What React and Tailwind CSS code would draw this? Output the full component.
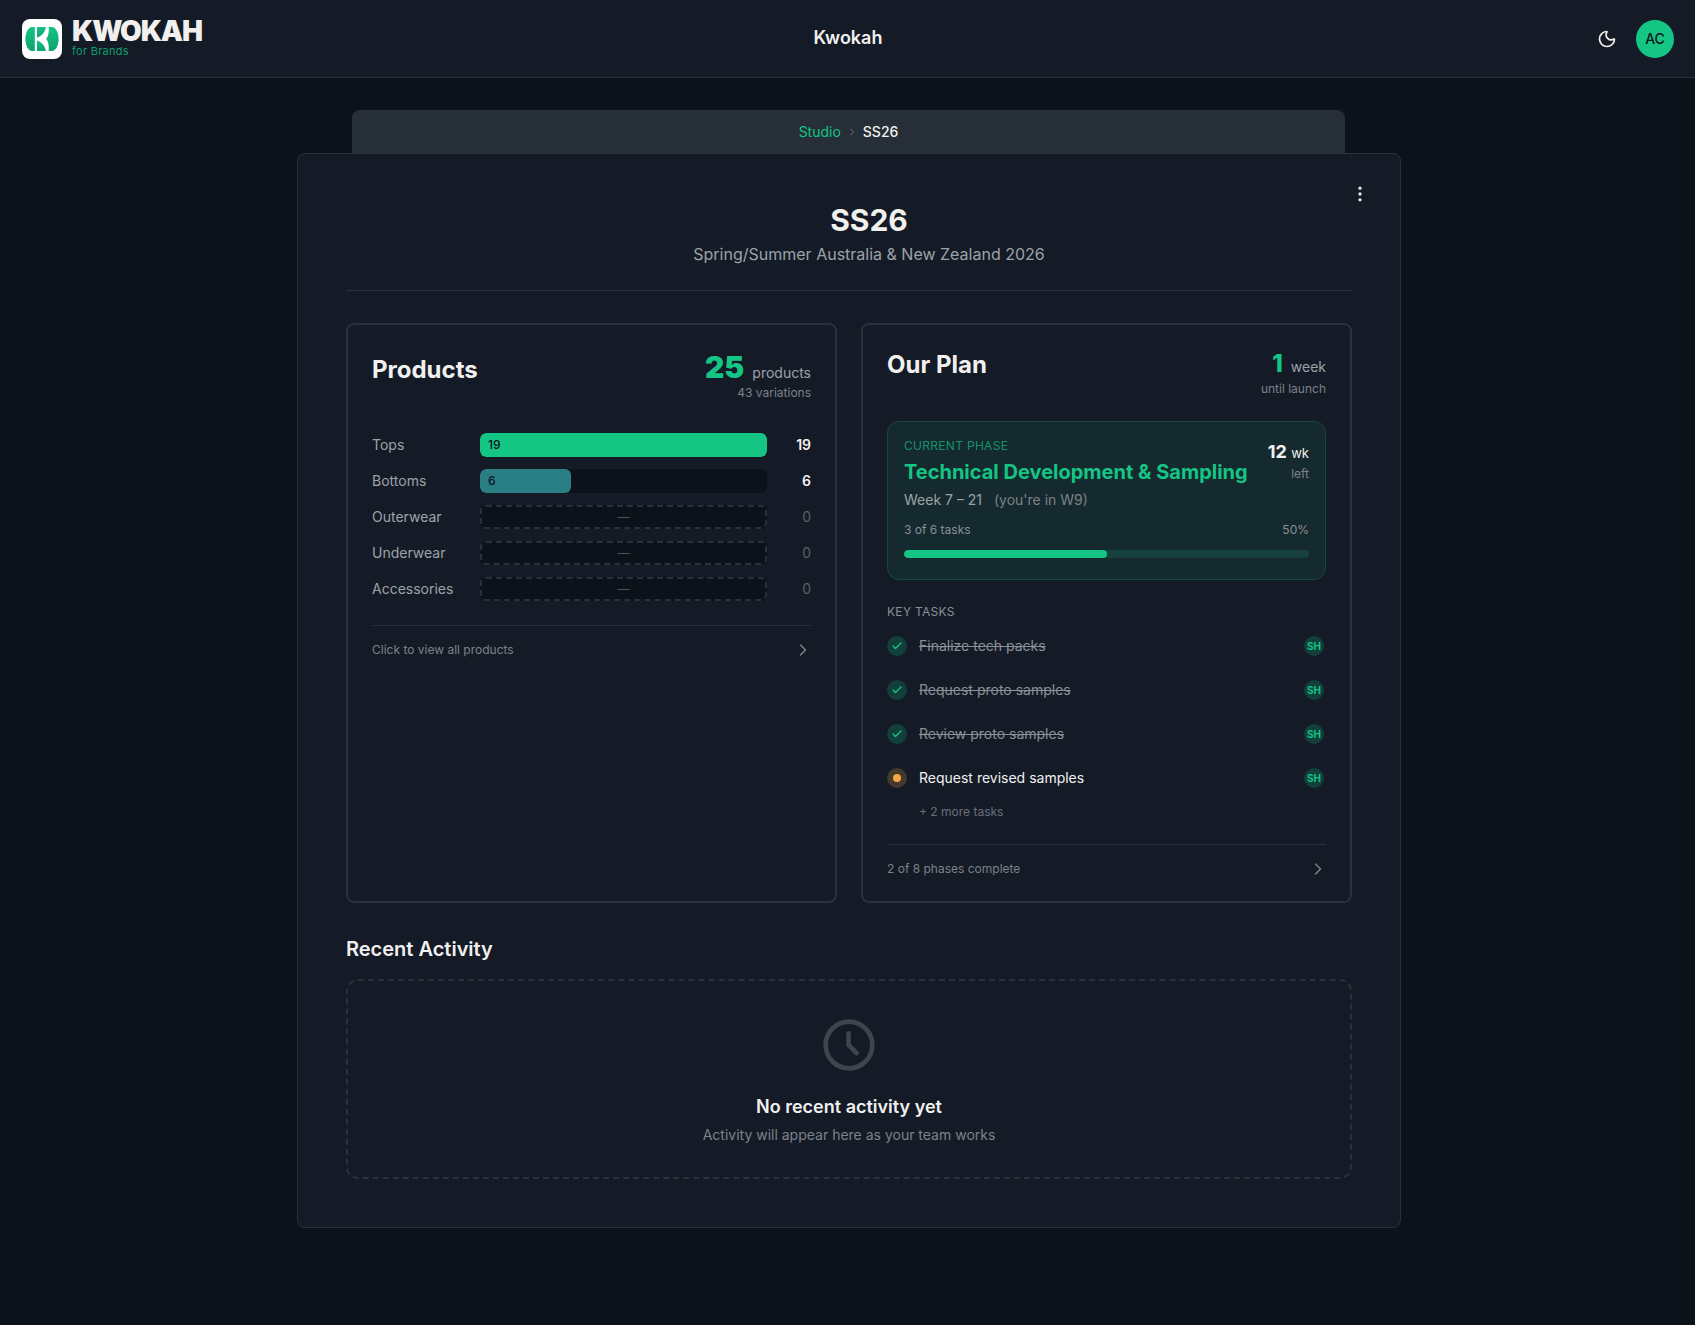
// App.jsx - Kwokah collection overview
import { ChevronRight, Moon, MoreVertical, Check } from 'lucide-react'

const categories = [
  { name: 'Tops', count: 19, fill: 'w-full bg-[#14c584]' },
  { name: 'Bottoms', count: 6, fill: 'w-[31.6%] bg-[#2a7f85]' },
  { name: 'Outerwear', count: 0 },
  { name: 'Underwear', count: 0 },
  { name: 'Accessories', count: 0 },
]

const tasks = [
  { title: 'Finalize tech packs', done: true },
  { title: 'Request proto samples', done: true },
  { title: 'Review proto samples', done: true },
  { title: 'Request revised samples', done: false },
]

function Logo() {
  return (
    <svg width="40" height="40" viewBox="0 0 40 40" className="shrink-0">
      <defs>
        <linearGradient id="logoGreen" x1="0" y1="0" x2="0" y2="1">
          <stop offset="0" stopColor="#14c584" />
          <stop offset="1" stopColor="#0ea371" />
        </linearGradient>
      </defs>
      <rect width="40" height="40" rx="8" fill="#fff" />
      <path d="M12.8 8H10C6.5 8 3.4 13 3.4 20s3.1 12 6.6 12h2.8z" fill="url(#logoGreen)" />
      <path d="M15 18.6V8h8.8C23.4 12.6 19.8 17.2 15 18.6z" fill="url(#logoGreen)" />
      <path d="M15 21.4V32h8.8C23.4 27.4 19.8 22.8 15 21.4z" fill="url(#logoGreen)" />
      <path d="M26.6 8H30c3.5 0 6.6 5 6.6 12S33.5 32 30 32h-3.4c.6-3.2.2-8.6-2.4-12 2.6-3.4 3-8.8 2.4-12z" fill="url(#logoGreen)" />
    </svg>
  )
}

function CategoryRow({ item }) {
  const empty = item.count === 0
  return (
    <div className="flex items-center">
      <span className="w-[108px] shrink-0 text-sm text-[#9ea2a8]">{item.name}</span>
      <div className={'h-6 w-[287px] shrink-0 overflow-hidden rounded-md bg-[#0c1219] ' + (empty ? 'flex items-center justify-center border-2 border-dashed border-[#2a313c]' : '')}>
        {empty ? (
          <span className="text-xs leading-none text-[#4d525a]">—</span>
        ) : (
          <div className={'flex h-full items-center rounded-md pl-2 text-xs font-medium text-[#0c1219] ' + item.fill}>{item.count}</div>
        )}
      </div>
      <span className={'ml-auto text-sm ' + (empty ? 'text-[#5b6068]' : 'font-semibold text-[#f1f0ee]')}>{item.count}</span>
    </div>
  )
}

function TaskRow({ task }) {
  return (
    <div className="flex h-11 items-center">
      {task.done ? (
        <div className="flex h-5 w-5 shrink-0 items-center justify-center rounded-full bg-[#123f3a]">
          <Check size={12} strokeWidth={2.5} className="text-[#14c584]" />
        </div>
      ) : (
        <div className="flex h-5 w-5 shrink-0 items-center justify-center rounded-full bg-[#43392c]">
          <div className="h-2 w-2 rounded-full bg-[#f5a742]" />
        </div>
      )}
      <span className={'ml-3 text-sm ' + (task.done ? 'text-[#8b8f96] line-through' : 'text-[#f1f0ee]')}>{task.title}</span>
      <div className="mr-0.5 ml-auto flex h-5 w-5 items-center justify-center rounded-full bg-[#123f3a] text-[10px] font-bold text-[#14c584]">SH</div>
    </div>
  )
}

function App() {
  return (
    <div className="min-h-screen bg-[#0c1219] font-['Inter',sans-serif] text-[#f1f0ee]">
      <header className="flex h-[78px] items-center justify-between border-b border-[#2a313c] bg-[#141b27] pr-[21px] pl-[22px]">
        <div className="flex w-[300px] items-center gap-2.5">
          <Logo />
          <div className="mb-[3px] flex flex-col">
            <span className="text-[28px] leading-7 font-black tracking-[-0.04em] text-[#f1f0ee]">KWOKAH</span>
            <span className="text-[11px] leading-3 tracking-wide text-[#0f9e6e]">for Brands</span>
          </div>
        </div>
        <span className="mb-0.5 text-lg font-semibold">Kwokah</span>
        <div className="flex w-[300px] items-center justify-end gap-[19px]">
          <Moon size={20} />
          <div className="flex h-[38px] w-[38px] items-center justify-center rounded-full bg-[#14c584] text-sm font-medium text-[#0c1219]">AC</div>
        </div>
      </header>

      <main className="flex flex-col items-center pt-8 pb-[97px] pl-[3px]">
        <div className="w-[1104px]">
          <nav className="ml-[55px] flex h-[43px] w-[993px] items-center justify-center gap-[5px] rounded-t-lg bg-[#262e38] text-sm">
            <span className="text-[#14c584]">Studio</span>
            <ChevronRight size={12} className="text-[#6b7078]" />
            <span className="font-medium">SS26</span>
          </nav>

          <div className="relative rounded-lg border border-[#2a313c] bg-[#141b27] p-12">
            <button className="absolute top-[30px] right-[30px] text-[#e6e6e6]">
              <MoreVertical size={20} />
            </button>

            <div className="border-b border-[#2a313c] pb-6 pl-10 text-center">
              <h1 className="text-[30px] leading-9 font-bold">SS26</h1>
              <p className="mt-1 text-base text-[#9ea2a8]">Spring/Summer Australia &amp; New Zealand 2026</p>
            </div>

            <div className="mt-8 grid grid-cols-2 gap-6">
              <section className="flex flex-col rounded-lg border-2 border-[#2a313c] p-6">
                <div className="flex items-start justify-between">
                  <h2 className="mt-[5px] text-2xl font-bold">Products</h2>
                  <div className="text-right">
                    <div className="flex items-baseline justify-end gap-2">
                      <span className="text-[30px] leading-9 font-black text-[#14c584]">25</span>
                      <span className="text-sm text-[#9ea2a8]">products</span>
                    </div>
                    <p className="text-xs text-[#7d8188]">43 variations</p>
                  </div>
                </div>
                <div className="mt-8 flex flex-col gap-3">
                  {categories.map(function (item) {
                    return <CategoryRow key={item.name} item={item} />
                  })}
                </div>
                <div className="mt-6 flex items-center justify-between border-t border-[#2a313c] pt-4">
                  <span className="text-xs text-[#7d8188]">Click to view all products</span>
                  <ChevronRight size={20} strokeWidth={1.75} className="-my-0.5 -mr-0.5 text-[#7d8188]" />
                </div>
              </section>

              <section className="flex flex-col rounded-lg border-2 border-[#2a313c] p-6">
                <div className="flex items-start justify-between">
                  <h2 className="text-2xl font-bold">Our Plan</h2>
                  <div className="text-right">
                    <div className="flex items-baseline justify-end gap-2">
                      <span className="text-2xl leading-[30px] font-extrabold text-[#14c584]">1</span>
                      <span className="text-sm text-[#9ea2a8]">week</span>
                    </div>
                    <p className="mt-0.5 text-xs text-[#7d8188]">until launch</p>
                  </div>
                </div>

                <div className="mt-6 rounded-xl border border-[#17483f] bg-[#152a2f] p-4 pb-[21px]">
                  <div className="flex items-start justify-between">
                    <div>
                      <p className="text-xs tracking-wide text-[#14936a] uppercase">Current Phase</p>
                      <h3 className="mt-1 text-xl font-bold text-[#14c584]">Technical Development &amp; Sampling</h3>
                      <p className="mt-1 text-sm text-[#9ea2a8]">
                        Week 7 – 21 <span className="ml-2 text-[#7d8188]">(you're in W9)</span>
                      </p>
                    </div>
                    <div className="text-right">
                      <p className="text-lg leading-7 font-bold">12 <span className="text-[13px] font-normal">wk</span></p>
                      <p className="-mt-px text-xs text-[#7d8188]">left</p>
                    </div>
                  </div>
                  <div className="mt-3 flex justify-between text-xs text-[#8b8f96]">
                    <span>3 of 6 tasks</span>
                    <span>50%</span>
                  </div>
                  <div className="mt-3 h-2 overflow-hidden rounded-full bg-[#17413c]">
                    <div className="h-full w-1/2 rounded-full bg-[#14c584]" />
                  </div>
                </div>

                <p className="mt-6 text-xs tracking-wide text-[#8b8f96] uppercase">Key Tasks</p>
                <div className="mt-1 flex flex-col">
                  {tasks.map(function (task) {
                    return <TaskRow key={task.title} task={task} />
                  })}
                </div>
                <p className="mt-1 pl-8 text-xs text-[#6b7078]">+ 2 more tasks</p>
                <div className="mt-6 flex items-center justify-between border-t border-[#2a313c] pt-4">
                  <span className="text-xs text-[#7d8188]">2 of 8 phases complete</span>
                  <ChevronRight size={20} strokeWidth={1.75} className="-my-0.5 -mr-0.5 text-[#7d8188]" />
                </div>
              </section>
            </div>

            <h2 className="mt-8 text-xl font-semibold">Recent Activity</h2>
            <div className="mt-4 flex flex-col items-center rounded-xl border-2 border-dashed border-[#2a313c] pt-9 pb-8">
              <svg width="56" height="56" viewBox="0 0 24 24" fill="none" stroke="#3f444d" strokeWidth="2" strokeLinecap="round" strokeLinejoin="round">
                <circle cx="12" cy="12" r="10" />
                <path d="M11.8 7v5l3.5 3.5" />
              </svg>
              <p className="mt-5 text-lg font-semibold">No recent activity yet</p>
              <p className="mt-1 text-sm text-[#7d8188]">Activity will appear here as your team works</p>
            </div>
          </div>
        </div>
      </main>
    </div>
  )
}

export default App
